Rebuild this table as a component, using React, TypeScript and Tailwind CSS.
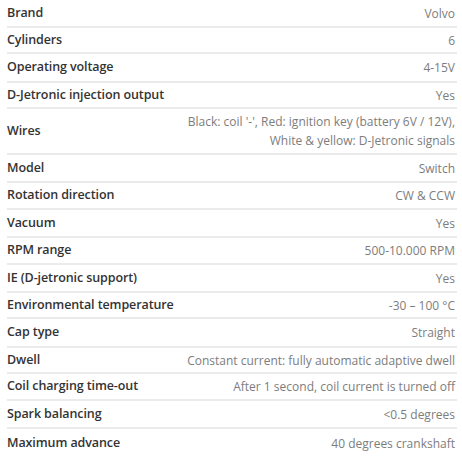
import React from 'react';

const specs = [
  { label: 'Brand', value: ['Volvo'], h: 'h-[28px]' },
  { label: 'Cylinders', value: ['6'], h: 'h-[26px]' },
  { label: 'Operating voltage', value: ['4-15V'], h: 'h-[29px]' },
  { label: 'D-Jetronic injection output', value: ['Yes'], h: 'h-[26px]' },
  {
    label: 'Wires',
    value: ["Black: coil '-', Red: ignition key (battery 6V / 12V),", 'White & yellow: D-Jetronic signals'],
    h: 'h-[46px]',
  },
  { label: 'Model', value: ['Switch'], h: 'h-[28px]' },
  { label: 'Rotation direction', value: ['CW & CCW'], h: 'h-[27px]' },
  { label: 'Vacuum', value: ['Yes'], h: 'h-[28px]' },
  { label: 'RPM range', value: ['500-10.000 RPM'], h: 'h-[27px]' },
  { label: 'IE (D-jetronic support)', value: ['Yes'], h: 'h-[28px]' },
  { label: 'Environmental temperature', value: ['-30 – 100 °C'], h: 'h-[26px]' },
  { label: 'Cap type', value: ['Straight'], h: 'h-[29px]' },
  { label: 'Dwell', value: ['Constant current: fully automatic adaptive dwell'], h: 'h-[26px]' },
  { label: 'Coil charging time-out', value: ['After 1 second, coil current is turned off'], h: 'h-[27px]' },
  { label: 'Spark balancing', value: ['<0.5 degrees'], h: 'h-[28px]' },
  { label: 'Maximum advance', value: ['40 degrees crankshaft'], h: 'h-[28px]' },
];

const App = () => {
  return (
    <div className="w-[462px] h-[460px] bg-white pl-[7px] pr-[5px] font-['Open_Sans',sans-serif] overflow-hidden">
      {specs.map((row, index) => (
        <div
          key={index}
          className={`${row.h} flex items-center justify-between ${index < specs.length - 1 ? 'border-b-2 border-[#ebebeb]' : ''}`}
        >
          <span className="text-[12.5px] font-semibold tracking-[-0.1px] text-[#333]">{row.label}</span>
          <div className="text-right text-[12px] leading-[19px] text-[#7d7d7d] pr-[2px]">
            {row.value.map((line, i) => (
              <div key={i}>{line}</div>
            ))}
          </div>
        </div>
      ))}
    </div>
  );
};

export default App;
